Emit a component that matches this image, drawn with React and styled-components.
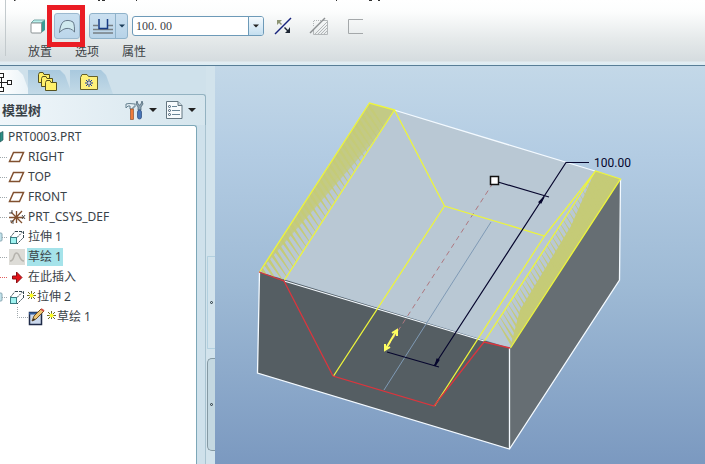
import React from "react";
import styled, { createGlobalStyle } from "styled-components";

const GlobalStyle = createGlobalStyle`
  * { box-sizing: border-box; }
  body {
    margin: 0;
    font-family: "Noto Sans", "Noto Sans CJK SC", sans-serif;
    font-size: 12px;
    color: #3a4248;
  }
  button { font: inherit; color: inherit; background: none; border: 0; padding: 0; margin: 0; }
  svg { display: block; }
`;

const Page = styled.div`
  display: flex;
  flex-direction: column;
  min-height: 100vh;
`;

/* ---------- dashboard ---------- */

const Ribbon = styled.header`
  display: flex;
  height: 66px;
  padding-left: 5px;
  overflow: hidden;
  background: linear-gradient(#ffffff 0, #fcfdfd 12px, #e6eaeb 38px, #d5dcdf 61px, #e3edf2 62px, #dcecf3 65px);
  border-bottom: 1px solid #587e97;
`;

const RibbonBody = styled.div`
  display: flex;
  flex-direction: column;
  flex: 1;
  height: 56px;
  border-left: 1px solid #c3cacd;
  padding-left: 22px;
`;

const TitleEdge = styled.div`
  height: 2px;
  margin-left: -14px;
`;

const ToolRow = styled.div`
  display: flex;
  align-items: center;
  height: 26px;
  margin-top: 11px;
`;

const Tool = styled.button`
  display: grid;
  place-items: center;
  width: ${(p) => p.$w || 26}px;
  height: 26px;
  margin-left: ${(p) => p.$gap || 0}px;
  border: 1px solid ${(p) => (p.$on ? "#9cb9cf" : "transparent")};
  border-radius: 3px;
  background: ${(p) => (p.$on ? "linear-gradient(#c9dff0, #bcd6ea)" : "none")};
`;

const Marked = styled.div`
  position: relative;
  display: flex;
  margin-left: 6px;
  &::after {
    content: "";
    position: absolute;
    inset: -8px -5px -8px -7px;
    border: 5px solid #ea1c24;
    pointer-events: none;
  }
`;

const SplitTool = styled.div`
  display: flex;
  height: 26px;
  margin-left: 9px;
  border: 1px solid #8fb2ca;
  border-radius: 3px;
  background: linear-gradient(#cbe0f0, #b7d3e8);
`;

const SplitPart = styled.button`
  display: grid;
  place-items: center;
  width: ${(p) => p.$w}px;
  & + & { border-left: 1px solid #8fb2ca; }
`;

const Combo = styled.div`
  display: flex;
  width: 132px;
  height: 20px;
  margin-left: 4px;
  border: 1px solid #6d9ab8;
  border-radius: 3px;
  background: #fff;
  overflow: hidden;
`;

const ComboInput = styled.input`
  flex: 1;
  min-width: 0;
  border: 0;
  padding: 0 3px;
  background: transparent;
  font: 12px "Liberation Serif", serif;
  color: #3c4246;
  outline: none;
`;

const ComboButton = styled.button`
  display: grid;
  place-items: center;
  width: 15px;
  border-left: 1px solid #6d9ab8;
  background: linear-gradient(#f5fafd, #c4dff0);
`;

const MenuRow = styled.nav`
  display: flex;
  gap: 23px;
  margin-top: 4px;
`;

const MenuItem = styled.button`
  line-height: 18px;
  color: #3d4245;
`;

/* ---------- side panel ---------- */

const Workspace = styled.main`
  display: flex;
  flex: 1;
`;

const Side = styled.aside`
  display: flex;
  flex-direction: column;
  width: 206px;
  background: #cfe1eb;
`;

const Tabs = styled.div`
  display: flex;
  align-items: flex-end;
  height: 28px;
  padding-top: 4px;
`;

const Tab = styled.button`
  display: grid;
  place-items: center start;
  width: ${(p) => p.$w}px;
  height: 24px;
  margin-right: -2px;
  padding-left: ${(p) => p.$pad || 0}px;
  clip-path: polygon(0 0, calc(100% - 12px) 0, calc(100% - 7px) 5px, 100% 100%, 0 100%);
  background: ${(p) => (p.$on ? "linear-gradient(90deg, #ffffff, #e8f2f7)" : "linear-gradient(#a9c9de, #c3dae7)")};
`;

const PanelHead = styled.div`
  display: flex;
  align-items: center;
  height: 31px;
  padding: 0 9px 0 2px;
  border-top: 1px solid #93b2c1;
  border-right: 1px solid #93b2c1;
  border-top-right-radius: 3px;
  background: linear-gradient(90deg, #f0f6fa, #d5e5ed);
`;

const PanelTitle = styled.h2`
  flex: 1;
  margin: 0;
  font: bold 13px/20px "Noto Sans CJK SC", sans-serif;
`;

const HeadTool = styled.button`
  display: flex;
  align-items: center;
  gap: 5px;
  margin-left: 9px;
`;

const TreeFrame = styled.div`
  flex: 1;
  padding-right: 8px;
  border-right: 1px solid #a9c3d0;
`;

const Tree = styled.ul`
  height: 100%;
  margin: 0;
  padding: 1px 0 0;
  list-style: none;
  background: #fff;
  border: solid #7ca7b8;
  border-width: 1px 1px 0 0;
  border-top-right-radius: 3px;
`;

const Row = styled.li`
  display: flex;
  align-items: center;
  height: 20px;
  padding-left: ${(p) => (p.$deep ? 16 : 0)}px;
`;

const Label = styled.button`
  height: 18px;
  padding: 0 1px;
  line-height: 18px;
  white-space: nowrap;
  background: ${(p) => (p.$on ? "#a5e3ea" : "none")};
`;

const Sash = styled.div`
  display: flex;
  flex-direction: column;
  align-items: flex-end;
  gap: 9px;
  width: 9px;
  padding-top: 190px;
  background: #d2e3ec;
`;

const Grip = styled.button`
  display: grid;
  place-items: center;
  width: 8px;
  height: 93px;
  border: 1px solid ${(p) => (p.$on ? "#8599a3" : "#b3d0df")};
  border-right: 0;
  border-radius: ${(p) => (p.$on ? "5px 0 0 5px" : "1px 0 0 1px")};
  background: ${(p) => (p.$on ? "#c4d8e1" : "#d2e3ec")};
`;

const Dot = styled.span`
  width: 3px;
  height: 3px;
  border: 1px solid #26353d;
  border-radius: 50%;
`;

const Canvas = styled.section`
  flex: 1;
  min-width: 0;
  background: linear-gradient(#c3d8e8 0%, #b3cce3 22%, #9ebad5 55%, #7b99c0 100%);
  & > svg { width: 100%; height: 100%; }
`;

/* ---------- icons ---------- */

const Arrow = ({ size = 8, color = "#222" }) => (
  <svg width={size} height="4" viewBox="0 0 8 4" aria-hidden="true"><path d="M0 0H8L4 4Z" fill={color} /></svg>
);

const SolidIcon = () => (
  <svg width="18" height="18" viewBox="0 0 18 18">
    <path d="M2 6 5 3H16L12 6Z" fill="#b8f1ec" stroke="#78a9a8" />
    <path d="M12 6 16 3V13L12 16Z" fill="#3b9b94" />
    <rect x="2" y="6" width="10.5" height="10" rx="1" fill="#fff" stroke="#8a9294" />
  </svg>
);

const SurfaceIcon = () => (
  <svg width="18" height="18" viewBox="0 0 18 18">
    <path d="M1.500 15.500C2 10 3 7 5.500 4.500C8 3 12 3 15 5C16.500 7 16.500 11 16.500 15C14 12 11 11 8 11.500C5 12 3 14 1.500 15.500Z" fill="#cfe9ee" stroke="#66798a" />
  </svg>
);

const DepthIcon = () => (
  <svg width="20" height="18" viewBox="0 0 20 18">
    <path d="M0 8.500H5M15 8.500H20M0 12.500H20M0 16H20" stroke="#777f84" strokeWidth="1.500" />
    <path d="M6 2V11.500H14.500V2" fill="none" stroke="#173a82" strokeWidth="1.500" />
  </svg>
);

const FlipIcon = () => (
  <svg width="18" height="18" viewBox="0 0 18 18">
    <path d="M1 17 17 1" stroke="#17237c" strokeWidth="1.500" />
    <path d="M3 3H8L6 5 8 7 7 8 5 6 3 8Z" fill="#8d9575" />
    <path d="M16 16H11L13 14 10 11 11 10 14 13 16 10Z" fill="#1d2634" />
  </svg>
);

const RemoveIcon = () => (
  <svg width="19" height="19" viewBox="0 0 19 19" fill="none" stroke="#b3b7b9">
    <path d="M4.500 4V10M5 3.500H12" strokeDasharray="1 1" />
    <path d="M4.500 12V17.500H18.500V3.500H14M6 17 18 5M9 17 18 8M12 17 18 11M15 17 18 14" />
    <path d="M1 16 16 1" stroke="#8c9092" strokeWidth="1.500" />
  </svg>
);

const ThinIcon = () => (
  <svg width="17" height="17" viewBox="0 0 17 17">
    <path d="M16 1.500H1.500V15.500H16" fill="none" stroke="#a4a8aa" />
  </svg>
);

const TreeTabIcon = () => (
  <svg width="13" height="20" viewBox="0 0 13 20" fill="#fff" stroke="#222" shapeRendering="crispEdges">
    <path d="M0 10.500H8M1.500 5V15" />
    <rect x="-1" y="1.500" width="4" height="4" /><rect x="7.500" y="8.500" width="4" height="4" /><rect x="-1" y="15.500" width="4" height="4" />
  </svg>
);

const folder = "M.5 2.500V10.500H11.500V2.500H6L5 .5H1.500Z";
const FoldersIcon = () => (
  <svg width="20" height="20" viewBox="0 0 20 20" fill="#fff06a" stroke="#55511f">
    <path d={folder} /><path d={folder} transform="translate(3 4)" /><path d={folder} transform="translate(7 8)" />
  </svg>
);

const FavoriteIcon = () => (
  <svg width="18" height="16" viewBox="0 0 18 16">
    <path d="M.5 3.500 2 .5H7L8.500 2.500H17.500V15.500H.5Z" fill="#fff17a" stroke="#66612b" />
    <path d="M9 5V13M5 9H13M6 6 12 12M12 6 6 12" stroke="#1837a5" /><circle cx="9" cy="9" r="1" fill="#fff" />
  </svg>
);

const ToolsIcon = () => (
  <svg width="19" height="20" viewBox="0 0 19 20">
    <path d="M1 8V4L4 3.500 10 4V7H8V9H5V6L3 6Z" fill="#e4eef3" stroke="#65808f" />
    <rect x="5.500" y="9" width="3" height="10.500" fill="#ef7b3b" stroke="#92502e" strokeWidth=".7" />
    <path d="M12 1 11 4 13 7V10H16V7L18 4 17 1 16 4 14.500 5 13 4Z" fill="#8ea4b2" stroke="#465e70" strokeWidth=".7" />
    <rect x="12.500" y="10" width="4" height="9" rx="2" fill="#4875b8" stroke="#29497b" strokeWidth=".7" />
  </svg>
);

const ListIcon = () => (
  <svg width="17" height="20" viewBox="0 0 17 20">
    <path d="M.5 1.500H12L16 5.500V18.500H.5Z" fill="#f7fbfd" stroke="#637681" />
    <path d="M12 1.500V5.500H16" fill="#c9d6dd" stroke="#637681" />
    <path d="M6 6.500H11M6 10.500H14M6 14.500H14" stroke="#6a8798" />
    <g fill="#fff" stroke="#3e596d"><circle cx="3.500" cy="6.500" r="1" /><circle cx="3.500" cy="10.500" r="1" /><circle cx="3.500" cy="14.500" r="1" /></g>
  </svg>
);

const NodeIcon = ({ children, lead = "#a0a8ac", node }) => (
  <svg width="27" height="20" viewBox="0 0 27 20" aria-hidden="true">
    <path d="M0 10.500H8" stroke={lead} strokeDasharray="1 1" />
    {node && <rect x="-3" y="6" width="5" height="8" rx="1" fill="#c3e3ec" stroke="#8aa9b4" />}
    {children}
  </svg>
);

const PlaneIcon = () => (
  <NodeIcon><path d="M13.500 5.500H23.500L19.500 14.500H9.500Z" fill="#fff" stroke="#81502f" strokeWidth="1.500" /></NodeIcon>
);

const CsysIcon = () => (
  <NodeIcon>
    <path d="M9 10.500H24M11 5 22 16M22 4 11 16M16.500 4V16" stroke="#81502f" strokeWidth="1.300" />
    <path d="M9 6H12V3M10 14H13V17M22 8 25 12M25 8 22 12" fill="none" stroke="#555" />
  </NodeIcon>
);

const ExtrudeIcon = () => (
  <NodeIcon node>
    <path d="M10.500 10 15 4.500M17 10.500 23 4.500M17 17 23 11" stroke="#33464e" strokeDasharray="2 1" />
    <path d="M15 4.500H23.500V11" fill="none" stroke="#33464e" strokeDasharray="3 1" />
    <rect x="10.500" y="10.500" width="6" height="6" fill="#9ff2ef" stroke="#397d83" />
  </NodeIcon>
);

const SketchDimIcon = () => (
  <NodeIcon>
    <rect x="9" y="2" width="16" height="16" fill="#dddcd7" />
    <path d="M10 14C15 14 13 6 16.500 6S19 14 24 14" fill="none" stroke="#b5b3ad" strokeWidth="1.500" />
  </NodeIcon>
);

const InsertIcon = () => (
  <NodeIcon lead="#e06060"><path d="M12.500 9H16.500V5L22 10.500 16.500 16V12H12.500Z" fill="#e51217" stroke="#8b1115" /></NodeIcon>
);

const SketchIcon = () => (
  <svg width="31" height="20" viewBox="0 0 31 20" aria-hidden="true">
    <path d="M1.500 0V10.500H13" fill="none" stroke="#a0a8ac" strokeDasharray="1 1" />
    <rect x="13.500" y="5.500" width="12" height="12" fill="#cbd8ec" stroke="#1f2b48" strokeWidth="1.500" /><path d="M13 6.500H26" stroke="#315b9b" strokeWidth="2" />
    <path d="M16 14 18 9 25 2 28 4 20 12Z" fill="#efc675" stroke="#72501f" /><path d="M16 14 18 11 19 13Z" fill="#222" /><path d="M25 2 28 4" stroke="#d15349" strokeWidth="2" />
  </svg>
);

const NewMark = () => (
  <svg width="9" height="12" viewBox="0 0 9 12" aria-hidden="true">
    <path d="M4.500 0V8M0 4.500H9M1 1 8 8M8 1 1 8" stroke="#706d25" strokeWidth="1" /><circle cx="4.500" cy="4.500" r="2" fill="#ffff22" />
  </svg>
);

const PartIcon = () => (
  <svg width="7" height="20" viewBox="0 0 7 20" aria-hidden="true"><path d="M0 6 3 4.500V13L0 15Z" fill="#2c9187" stroke="#28575a" strokeWidth=".7" /></svg>
);

/* ---------- model ---------- */

const mix = (a, b, t) => [a[0] + (b[0] - a[0]) * t, a[1] + (b[1] - a[1]) * t];

function streaks(from, to, dx, dy, count) {
  return Array.from({ length: count }, (_, i) => {
    const [x, y] = mix(from, to, i / count);
    const [u, v] = mix(from, to, (i + 0.55) / count);
    return `M${x} ${y}L${u} ${v}L${x + dx} ${y + dy}Z`;
  }).join("");
}

const Model = () => (
  <svg viewBox="215 66 490 398" role="img" aria-label="拉伸 2">
    <defs>
      <clipPath id="leftStrip"><path d="M369.500 103 394.500 110 284.500 280 259.500 272Z" /></clipPath>
      <clipPath id="rightStrip"><path d="M595.500 171 620.500 179 510.500 348 484.500 341Z" /></clipPath>
    </defs>
    <path d="M369.500 103 620.500 179 510.500 348 259.500 272Z" fill="#b9c8d4" />
    <path d="M259.500 272 509.500 348V449L257.500 373Z" fill="#555e63" />
    <path d="M510 348 620.500 179 619.500 280 509.500 449Z" fill="#666e73" />
    <g clipPath="url(#leftStrip)" fill="#c5cb77">
      <path d="M369 103 395 110 372 143 259 272Z" opacity=".75" />
      <path d="M369 103 394 110 259 272Z" opacity=".4" />
      <path d={streaks([369, 103], [259, 272], 20, 32, 34)} />
    </g>
    <g clipPath="url(#rightStrip)" fill="#c5cb77">
      <path d="M595 171 621 179 510 348 520 310 571 226Z" />
      <path d={streaks([620, 179], [510, 348], -19, -28, 40)} />
    </g>
    <path d="M394 110 595 171M284 281 484 341M259.500 272 257.500 373 509.500 449 619.500 280 620.500 179M509.500 348V449" fill="none" stroke="#f4faff" strokeWidth="1.300" />
    <path d="M491 222 384 390" stroke="#7f9ab5" />
    <path d="M493 183 387 348" stroke="#ae7880" strokeDasharray="5 4" />
    <path d="M259.500 272 369.500 103 394.500 110 284.500 280M394.500 110 444.500 206 544.500 236 595.500 171 620.500 179 510.500 348M444.500 206 333.500 376M544.500 236 434.500 406M595.500 171 484.500 341" fill="none" stroke="#edf53b" strokeWidth="1.300" />
    <path d="M259 272 284 281 333 376 434 406 484 342 510 348" fill="none" stroke="#dc353d" strokeWidth="1.300" />
    <g stroke="#06062d" fill="none" strokeWidth="1.200">
      <path d="M498 182 549 197M387 352 439 367M434 366 566 162.500H589" />
      <path d="M544 197 539 202 541 203ZM435 366 439 360 437 359Z" fill="#06062d" />
    </g>
    <path d="M385 350 397 330M392 333 397 330V336M385 344V350L390 347" fill="none" stroke="#ffff60" strokeWidth="2" />
    <rect x="490.500" y="176.500" width="8" height="8" fill="#fff" stroke="#111" strokeWidth="1.500" />
    <text x="594" y="167" fontFamily="Roboto, sans-serif" fontSize="12" fill="#06062d">100.00</text>
  </svg>
);

const nodes = [
  { icon: <PartIcon />, text: "PRT0003.PRT" },
  { icon: <PlaneIcon />, text: "RIGHT" },
  { icon: <PlaneIcon />, text: "TOP" },
  { icon: <PlaneIcon />, text: "FRONT" },
  { icon: <CsysIcon />, text: "PRT_CSYS_DEF" },
  { icon: <ExtrudeIcon />, text: "拉伸 1" },
  { icon: <SketchDimIcon />, text: "草绘 1", selected: true },
  { icon: <InsertIcon />, text: "在此插入" },
  { icon: <ExtrudeIcon />, text: "拉伸 2", fresh: true },
  { icon: <SketchIcon />, text: "草绘 1", fresh: true, deep: true },
];

export default function App() {
  return (
    <Page>
      <GlobalStyle />
      <Ribbon>
        <RibbonBody>
          <TitleEdge>
            <svg width="380" height="2" viewBox="0 0 380 2" fill="#333">
              <path d="M0 0H2L1 1H0ZM84 0H86V1H84ZM88 0H91V1H88ZM122 0H123V1H122ZM322 0H323V1H322ZM355 0H358V1H355ZM364 0H366V1H364Z" />
            </svg>
          </TitleEdge>
          <ToolRow>
            <Tool $w={20} aria-label="实体"><SolidIcon /></Tool>
            <Marked><Tool $on aria-label="曲面" aria-pressed="true"><SurfaceIcon /></Tool></Marked>
            <SplitTool>
              <SplitPart $w={25} aria-label="深度"><DepthIcon /></SplitPart>
              <SplitPart $w={12} aria-label="深度选项"><Arrow size={6} color="#1c3d59" /></SplitPart>
            </SplitTool>
            <Combo>
              <ComboInput aria-label="深度值" defaultValue="100. 00" />
              <ComboButton aria-label="最近的值"><Arrow size={6} /></ComboButton>
            </Combo>
            <Tool $gap={6} aria-label="反向"><FlipIcon /></Tool>
            <Tool $gap={9} aria-label="移除材料" disabled><RemoveIcon /></Tool>
            <Tool $gap={11} aria-label="加厚草绘" disabled><ThinIcon /></Tool>
          </ToolRow>
          <MenuRow>
            <MenuItem>放置</MenuItem><MenuItem>选项</MenuItem><MenuItem>属性</MenuItem>
          </MenuRow>
        </RibbonBody>
      </Ribbon>
      <Workspace>
        <Side>
          <Tabs>
            <Tab $w={30} $on aria-label="模型树"><TreeTabIcon /></Tab>
            <Tab $w={44} $pad={10} aria-label="文件夹浏览器"><FoldersIcon /></Tab>
            <Tab $w={43} $pad={10} aria-label="收藏夹"><FavoriteIcon /></Tab>
          </Tabs>
          <PanelHead>
            <PanelTitle>模型树</PanelTitle>
            <HeadTool aria-label="设置"><ToolsIcon /><Arrow /></HeadTool>
            <HeadTool aria-label="显示"><ListIcon /><Arrow /></HeadTool>
          </PanelHead>
          <TreeFrame>
            <Tree>
              {nodes.map((n, i) => (
                <Row key={i} $deep={n.deep}>
                  {n.icon}
                  {n.fresh && <NewMark />}
                  <Label $on={n.selected}>{n.text}</Label>
                </Row>
              ))}
            </Tree>
          </TreeFrame>
        </Side>
        <Sash>
          <Grip aria-label="折叠"><Dot /></Grip>
          <Grip $on aria-label="展开"><Dot /></Grip>
        </Sash>
        <Canvas><Model /></Canvas>
      </Workspace>
    </Page>
  );
}
